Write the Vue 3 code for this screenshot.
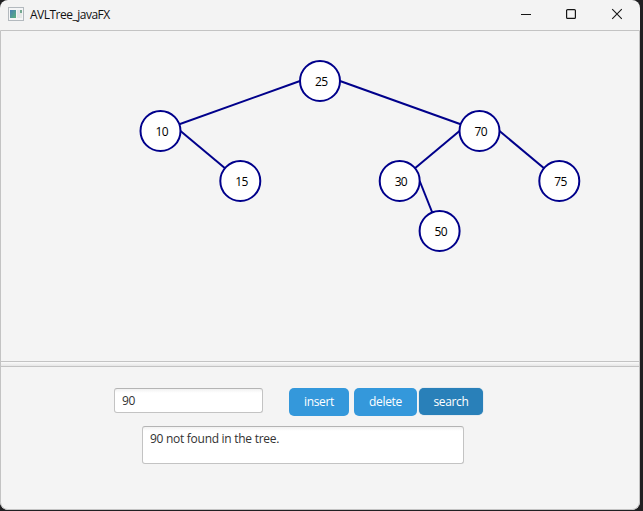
<script setup>
import { ref } from 'vue'

const value = ref('90')
const message = ref('90 not found in the tree.')

const nodes = [
  { key: 25, x: 320, y: 81 },
  { key: 10, x: 160.5, y: 131 },
  { key: 70, x: 479.5, y: 131 },
  { key: 15, x: 240.3, y: 181 },
  { key: 30, x: 399.7, y: 181 },
  { key: 75, x: 559.3, y: 181 },
  { key: 50, x: 439.6, y: 231 },
]

const edges = [
  [300, 81, 160.5, 131],
  [340, 81, 479.5, 131],
  [180.5, 131, 240.3, 181],
  [459.5, 131, 399.7, 181],
  [499.5, 131, 559.3, 181],
  [419.7, 181, 439.6, 231],
]
</script>

<template>
  <div class="desktop">
    <main class="window">
      <header class="titlebar">
        <svg class="app-icon" width="16" height="14" viewBox="0 0 16 14">
          <defs>
            <linearGradient id="pane" x1="0" y1="0" x2="1" y2="1">
              <stop offset="0" stop-color="#477fb5" />
              <stop offset="1" stop-color="#59b17d" />
            </linearGradient>
          </defs>
          <rect x=".5" y=".5" width="15" height="13" fill="#f4f5f6" stroke="#b3b9be" />
          <rect x="2" y="3" width="6" height="8" fill="url(#pane)" />
          <rect x="9" y="3" width="3" height="8" fill="#e1e5e8" />
          <rect x="12" y="3" width="2" height="3" fill="#74a890" />
          <rect x="12" y="6" width="2" height="5" fill="#e6e9e7" />
        </svg>
        <span class="title">AVLTree_javaFX</span>
        <svg class="window-controls" width="104" height="12" viewBox="0 0 104 12" fill="none" stroke="#151515">
          <path d="M0 6.5H10" />
          <rect x="45.6" y="1.6" width="8.8" height="8.8" rx="1" stroke-width="1.2" />
          <path d="M91.2 1.2L100.8 10.8M100.8 1.2L91.2 10.8" stroke-width="1.1" />
        </svg>
      </header>

      <section class="content">
        <svg class="tree" width="638" height="330" viewBox="1 31 638 330">
          <line v-for="(e, i) in edges" :key="i" class="edge" :x1="e[0]" :y1="e[1]" :x2="e[2]" :y2="e[3]" />
          <g v-for="n in nodes" :key="n.key">
            <circle class="node" :cx="n.x" :cy="n.y" r="20" />
            <text class="key" :x="n.x - 5" :y="n.y + 5" textLength="13">{{ n.key }}</text>
          </g>
        </svg>
        <div class="divider"></div>
        <div class="controls">
          <div class="row">
            <input v-model="value" class="field" type="text" />
            <button class="btn insert">insert</button>
            <button class="btn delete">delete</button>
            <button class="btn search">search</button>
          </div>
          <div class="output">{{ message }}</div>
        </div>
      </section>
    </main>
  </div>
</template>

<style>
body {
  margin: 0;
  overflow: hidden;
}
</style>

<style scoped>
.desktop {
  width: 643px;
  height: 511px;
  background: #202022;
  font-family: "Open Sans", "Noto Sans", sans-serif;
  font-size: 12px;
}
.window {
  box-sizing: border-box;
  display: flex;
  flex-direction: column;
  width: 640px;
  height: 510px;
  overflow: hidden;
  border-radius: 8px;
  background: #f3f3f3;
}
.titlebar {
  display: flex;
  flex: none;
  align-items: center;
  box-sizing: border-box;
  height: 30px;
  padding: 0 15px 2px 8px;
}
.title {
  margin-left: 6px;
  color: #111;
  letter-spacing: -0.5px;
  line-height: 18px;
  padding-top: 2px;
}
.window-controls {
  margin-left: auto;
}
.content {
  box-sizing: border-box;
  display: flex;
  flex: 1;
  flex-direction: column;
  border: 1px solid #c3c3c3;
  border-radius: 0 0 8px 8px;
  background: #f4f4f4;
}
.tree {
  display: block;
  flex: none;
}
.edge {
  stroke: #00008b;
  stroke-width: 2;
}
.node {
  fill: #fff;
  stroke: #00008b;
  stroke-width: 2;
}
.key {
  fill: #000;
  font-size: 12px;
}
.divider {
  box-sizing: border-box;
  flex: none;
  height: 6px;
  border-top: 1px solid #c3c3c3;
  border-bottom: 1px solid #c3c3c3;
  background: linear-gradient(#fafafa, #e6e6e6);
}
.controls {
  padding: 21px 0 0 113px;
}
.row {
  display: flex;
  align-items: flex-start;
  height: 28px;
}
.field,
.output {
  box-sizing: border-box;
  border: 1px solid #c3c3c3;
  border-top-color: #b4b4b4;
  border-radius: 3px;
  background: linear-gradient(#f1f1f1, #fff 4px);
  color: #323232;
}
.field {
  width: 149px;
  height: 25px;
  padding: 0 7px;
  outline: none;
  font: inherit;
  letter-spacing: -0.3px;
}
.output {
  width: 322px;
  height: 38px;
  margin: 10px 0 0 28px;
  padding: 4px 7px;
  line-height: 16px;
  letter-spacing: -0.28px;
}
.btn {
  box-sizing: border-box;
  height: 28px;
  padding: 0 0 2px;
  border: 0;
  border-radius: 5px;
  background: #3498db;
  color: #fff;
  font: inherit;
  letter-spacing: -0.35px;
}
.insert {
  width: 60px;
  margin-left: 26px;
}
.delete {
  width: 63px;
  margin-left: 5px;
}
.search {
  width: 64px;
  height: 27px;
  padding-bottom: 0;
  margin-left: 2px;
  background: #2980b9;
  box-shadow: 0 0 1px #5e9bc6;
}
</style>
